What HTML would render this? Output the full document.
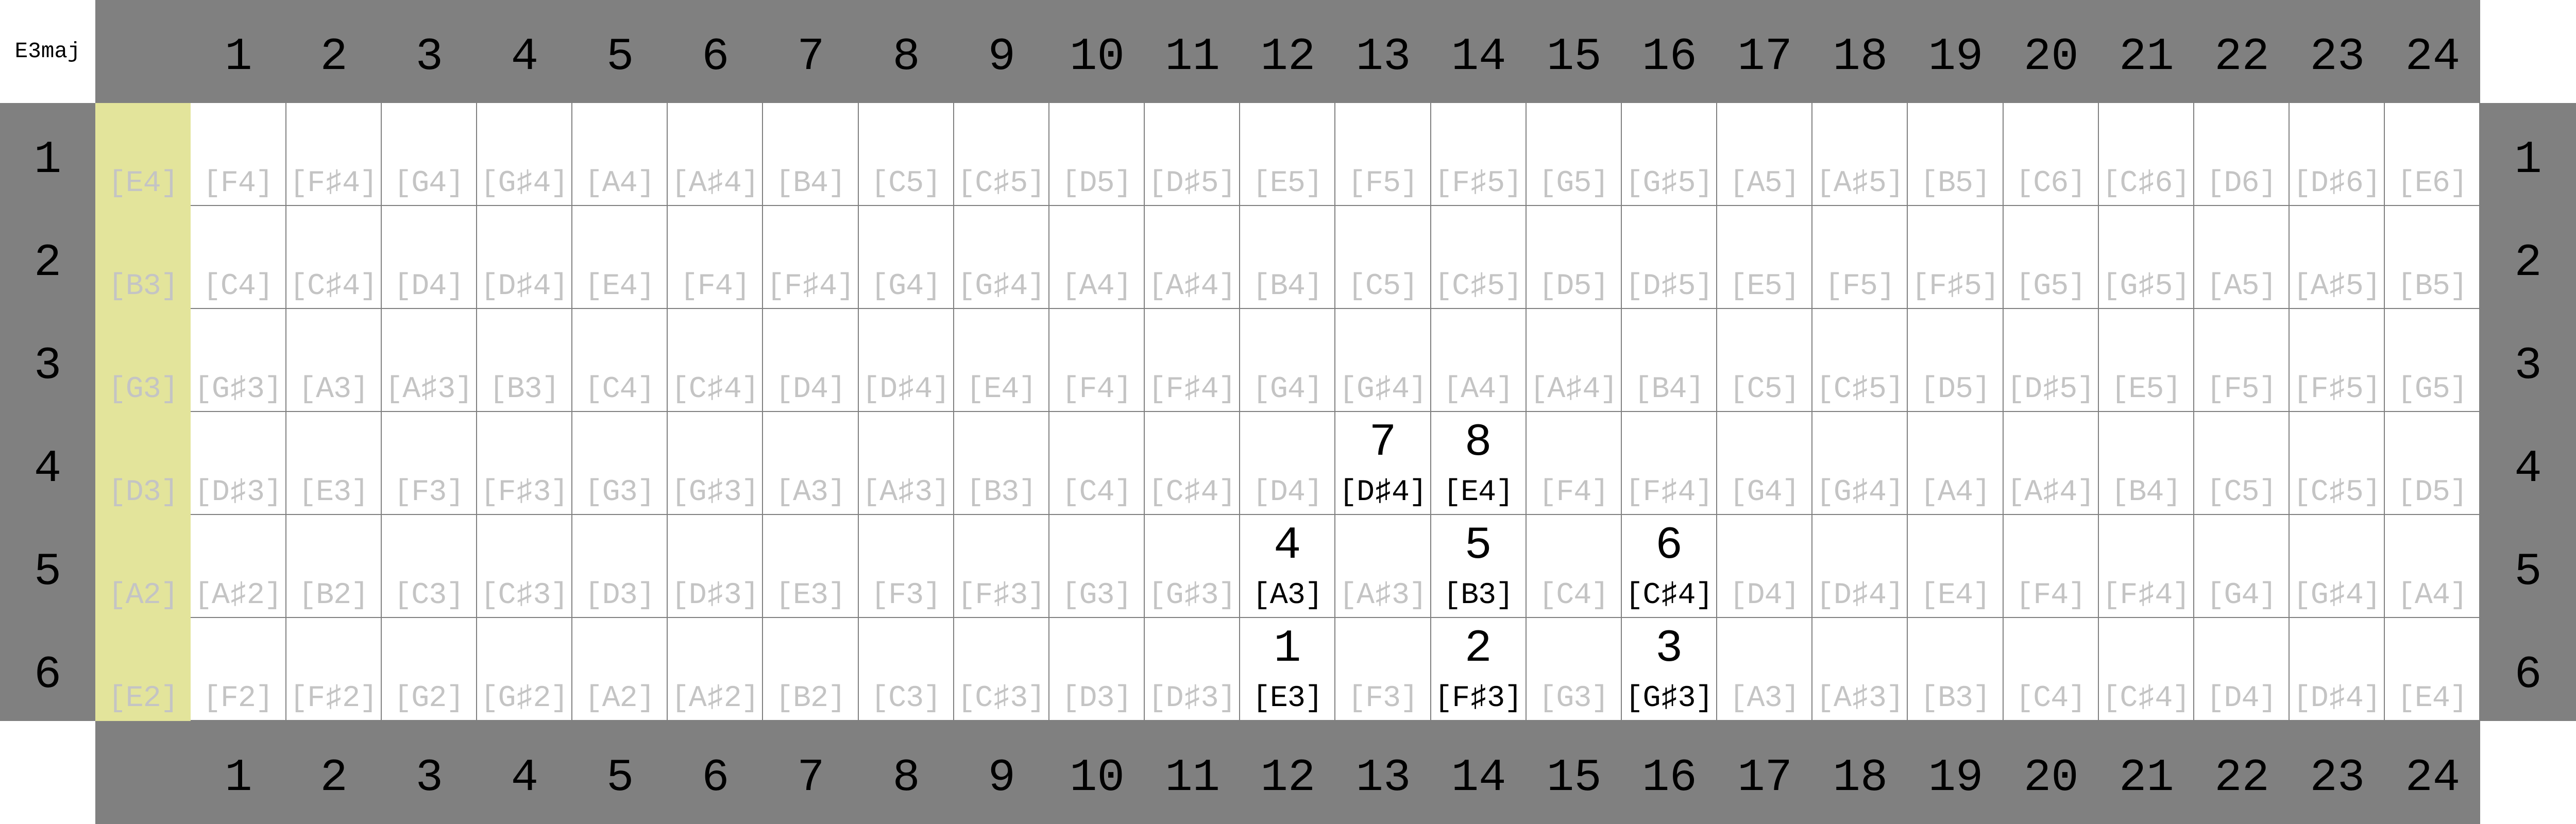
<!DOCTYPE html>
<html><head><meta charset="utf-8"><style>
*{margin:0;padding:0;box-sizing:border-box}
html,body{width:100vw;height:100vh;overflow:hidden}
body{background:#fff;font-family:"Liberation Mono","DejaVu Sans Mono",monospace;position:relative}
.r{display:flex;height:12.5vh;position:absolute;left:0;width:100vw;overflow:hidden}
.r>div{width:calc(100vw / 27);height:12.5vh;position:relative;flex:none;overflow:hidden}
.g{background:#808080}
.w{background:#fff}
.hn{position:absolute;left:0;right:0;top:3.8vh;font-size:1.7778vw;line-height:6.25vh;text-align:center;color:#000}
.c{border-right:2px solid #808080;border-bottom:2px solid #808080;background:#fff}
.o{background:#e3e49b}
.c span,.o span{position:absolute;left:0;right:0;top:7.55vh;font-size:1.1667vw;line-height:4.4vh;text-align:center;color:#c4c4c4;white-space:nowrap;letter-spacing:-0.02vw}
.c b{position:absolute;left:0;right:0;top:0.6vh;font-size:1.7778vw;line-height:6.25vh;text-align:center;color:#000;font-weight:normal}
.c.h span{color:#000}
.lab{position:absolute;left:0;top:4.5vh;width:100%;text-align:center;font-size:0.852vw;line-height:3.5vh;color:#000}
</style></head><body>
<div class="r" style="top:0"><div class="w"><div class="lab">E3maj</div></div><div class="g"></div><div class="g"><div class="hn">1</div></div><div class="g"><div class="hn">2</div></div><div class="g"><div class="hn">3</div></div><div class="g"><div class="hn">4</div></div><div class="g"><div class="hn">5</div></div><div class="g"><div class="hn">6</div></div><div class="g"><div class="hn">7</div></div><div class="g"><div class="hn">8</div></div><div class="g"><div class="hn">9</div></div><div class="g"><div class="hn">10</div></div><div class="g"><div class="hn">11</div></div><div class="g"><div class="hn">12</div></div><div class="g"><div class="hn">13</div></div><div class="g"><div class="hn">14</div></div><div class="g"><div class="hn">15</div></div><div class="g"><div class="hn">16</div></div><div class="g"><div class="hn">17</div></div><div class="g"><div class="hn">18</div></div><div class="g"><div class="hn">19</div></div><div class="g"><div class="hn">20</div></div><div class="g"><div class="hn">21</div></div><div class="g"><div class="hn">22</div></div><div class="g"><div class="hn">23</div></div><div class="g"><div class="hn">24</div></div><div class="w"></div></div>

<div class="r" style="top:12.5vh"><div class="g"><div class="hn">1</div></div><div class="o"><span>[E4]</span></div><div class="c"><span>[F4]</span></div><div class="c"><span>[F♯4]</span></div><div class="c"><span>[G4]</span></div><div class="c"><span>[G♯4]</span></div><div class="c"><span>[A4]</span></div><div class="c"><span>[A♯4]</span></div><div class="c"><span>[B4]</span></div><div class="c"><span>[C5]</span></div><div class="c"><span>[C♯5]</span></div><div class="c"><span>[D5]</span></div><div class="c"><span>[D♯5]</span></div><div class="c"><span>[E5]</span></div><div class="c"><span>[F5]</span></div><div class="c"><span>[F♯5]</span></div><div class="c"><span>[G5]</span></div><div class="c"><span>[G♯5]</span></div><div class="c"><span>[A5]</span></div><div class="c"><span>[A♯5]</span></div><div class="c"><span>[B5]</span></div><div class="c"><span>[C6]</span></div><div class="c"><span>[C♯6]</span></div><div class="c"><span>[D6]</span></div><div class="c"><span>[D♯6]</span></div><div class="c"><span>[E6]</span></div><div class="g"><div class="hn">1</div></div></div>

<div class="r" style="top:25vh"><div class="g"><div class="hn">2</div></div><div class="o"><span>[B3]</span></div><div class="c"><span>[C4]</span></div><div class="c"><span>[C♯4]</span></div><div class="c"><span>[D4]</span></div><div class="c"><span>[D♯4]</span></div><div class="c"><span>[E4]</span></div><div class="c"><span>[F4]</span></div><div class="c"><span>[F♯4]</span></div><div class="c"><span>[G4]</span></div><div class="c"><span>[G♯4]</span></div><div class="c"><span>[A4]</span></div><div class="c"><span>[A♯4]</span></div><div class="c"><span>[B4]</span></div><div class="c"><span>[C5]</span></div><div class="c"><span>[C♯5]</span></div><div class="c"><span>[D5]</span></div><div class="c"><span>[D♯5]</span></div><div class="c"><span>[E5]</span></div><div class="c"><span>[F5]</span></div><div class="c"><span>[F♯5]</span></div><div class="c"><span>[G5]</span></div><div class="c"><span>[G♯5]</span></div><div class="c"><span>[A5]</span></div><div class="c"><span>[A♯5]</span></div><div class="c"><span>[B5]</span></div><div class="g"><div class="hn">2</div></div></div>

<div class="r" style="top:37.5vh"><div class="g"><div class="hn">3</div></div><div class="o"><span>[G3]</span></div><div class="c"><span>[G♯3]</span></div><div class="c"><span>[A3]</span></div><div class="c"><span>[A♯3]</span></div><div class="c"><span>[B3]</span></div><div class="c"><span>[C4]</span></div><div class="c"><span>[C♯4]</span></div><div class="c"><span>[D4]</span></div><div class="c"><span>[D♯4]</span></div><div class="c"><span>[E4]</span></div><div class="c"><span>[F4]</span></div><div class="c"><span>[F♯4]</span></div><div class="c"><span>[G4]</span></div><div class="c"><span>[G♯4]</span></div><div class="c"><span>[A4]</span></div><div class="c"><span>[A♯4]</span></div><div class="c"><span>[B4]</span></div><div class="c"><span>[C5]</span></div><div class="c"><span>[C♯5]</span></div><div class="c"><span>[D5]</span></div><div class="c"><span>[D♯5]</span></div><div class="c"><span>[E5]</span></div><div class="c"><span>[F5]</span></div><div class="c"><span>[F♯5]</span></div><div class="c"><span>[G5]</span></div><div class="g"><div class="hn">3</div></div></div>

<div class="r" style="top:50vh"><div class="g"><div class="hn">4</div></div><div class="o"><span>[D3]</span></div><div class="c"><span>[D♯3]</span></div><div class="c"><span>[E3]</span></div><div class="c"><span>[F3]</span></div><div class="c"><span>[F♯3]</span></div><div class="c"><span>[G3]</span></div><div class="c"><span>[G♯3]</span></div><div class="c"><span>[A3]</span></div><div class="c"><span>[A♯3]</span></div><div class="c"><span>[B3]</span></div><div class="c"><span>[C4]</span></div><div class="c"><span>[C♯4]</span></div><div class="c"><span>[D4]</span></div><div class="c h"><b>7</b><span>[D♯4]</span></div><div class="c h"><b>8</b><span>[E4]</span></div><div class="c"><span>[F4]</span></div><div class="c"><span>[F♯4]</span></div><div class="c"><span>[G4]</span></div><div class="c"><span>[G♯4]</span></div><div class="c"><span>[A4]</span></div><div class="c"><span>[A♯4]</span></div><div class="c"><span>[B4]</span></div><div class="c"><span>[C5]</span></div><div class="c"><span>[C♯5]</span></div><div class="c"><span>[D5]</span></div><div class="g"><div class="hn">4</div></div></div>

<div class="r" style="top:62.5vh"><div class="g"><div class="hn">5</div></div><div class="o"><span>[A2]</span></div><div class="c"><span>[A♯2]</span></div><div class="c"><span>[B2]</span></div><div class="c"><span>[C3]</span></div><div class="c"><span>[C♯3]</span></div><div class="c"><span>[D3]</span></div><div class="c"><span>[D♯3]</span></div><div class="c"><span>[E3]</span></div><div class="c"><span>[F3]</span></div><div class="c"><span>[F♯3]</span></div><div class="c"><span>[G3]</span></div><div class="c"><span>[G♯3]</span></div><div class="c h"><b>4</b><span>[A3]</span></div><div class="c"><span>[A♯3]</span></div><div class="c h"><b>5</b><span>[B3]</span></div><div class="c"><span>[C4]</span></div><div class="c h"><b>6</b><span>[C♯4]</span></div><div class="c"><span>[D4]</span></div><div class="c"><span>[D♯4]</span></div><div class="c"><span>[E4]</span></div><div class="c"><span>[F4]</span></div><div class="c"><span>[F♯4]</span></div><div class="c"><span>[G4]</span></div><div class="c"><span>[G♯4]</span></div><div class="c"><span>[A4]</span></div><div class="g"><div class="hn">5</div></div></div>

<div class="r" style="top:75vh"><div class="g"><div class="hn">6</div></div><div class="o"><span>[E2]</span></div><div class="c"><span>[F2]</span></div><div class="c"><span>[F♯2]</span></div><div class="c"><span>[G2]</span></div><div class="c"><span>[G♯2]</span></div><div class="c"><span>[A2]</span></div><div class="c"><span>[A♯2]</span></div><div class="c"><span>[B2]</span></div><div class="c"><span>[C3]</span></div><div class="c"><span>[C♯3]</span></div><div class="c"><span>[D3]</span></div><div class="c"><span>[D♯3]</span></div><div class="c h"><b>1</b><span>[E3]</span></div><div class="c"><span>[F3]</span></div><div class="c h"><b>2</b><span>[F♯3]</span></div><div class="c"><span>[G3]</span></div><div class="c h"><b>3</b><span>[G♯3]</span></div><div class="c"><span>[A3]</span></div><div class="c"><span>[A♯3]</span></div><div class="c"><span>[B3]</span></div><div class="c"><span>[C4]</span></div><div class="c"><span>[C♯4]</span></div><div class="c"><span>[D4]</span></div><div class="c"><span>[D♯4]</span></div><div class="c"><span>[E4]</span></div><div class="g"><div class="hn">6</div></div></div>

<div class="r" style="top:87.5vh"><div class="w"></div><div class="g"></div><div class="g"><div class="hn">1</div></div><div class="g"><div class="hn">2</div></div><div class="g"><div class="hn">3</div></div><div class="g"><div class="hn">4</div></div><div class="g"><div class="hn">5</div></div><div class="g"><div class="hn">6</div></div><div class="g"><div class="hn">7</div></div><div class="g"><div class="hn">8</div></div><div class="g"><div class="hn">9</div></div><div class="g"><div class="hn">10</div></div><div class="g"><div class="hn">11</div></div><div class="g"><div class="hn">12</div></div><div class="g"><div class="hn">13</div></div><div class="g"><div class="hn">14</div></div><div class="g"><div class="hn">15</div></div><div class="g"><div class="hn">16</div></div><div class="g"><div class="hn">17</div></div><div class="g"><div class="hn">18</div></div><div class="g"><div class="hn">19</div></div><div class="g"><div class="hn">20</div></div><div class="g"><div class="hn">21</div></div><div class="g"><div class="hn">22</div></div><div class="g"><div class="hn">23</div></div><div class="g"><div class="hn">24</div></div><div class="w"></div></div>
</body></html>
